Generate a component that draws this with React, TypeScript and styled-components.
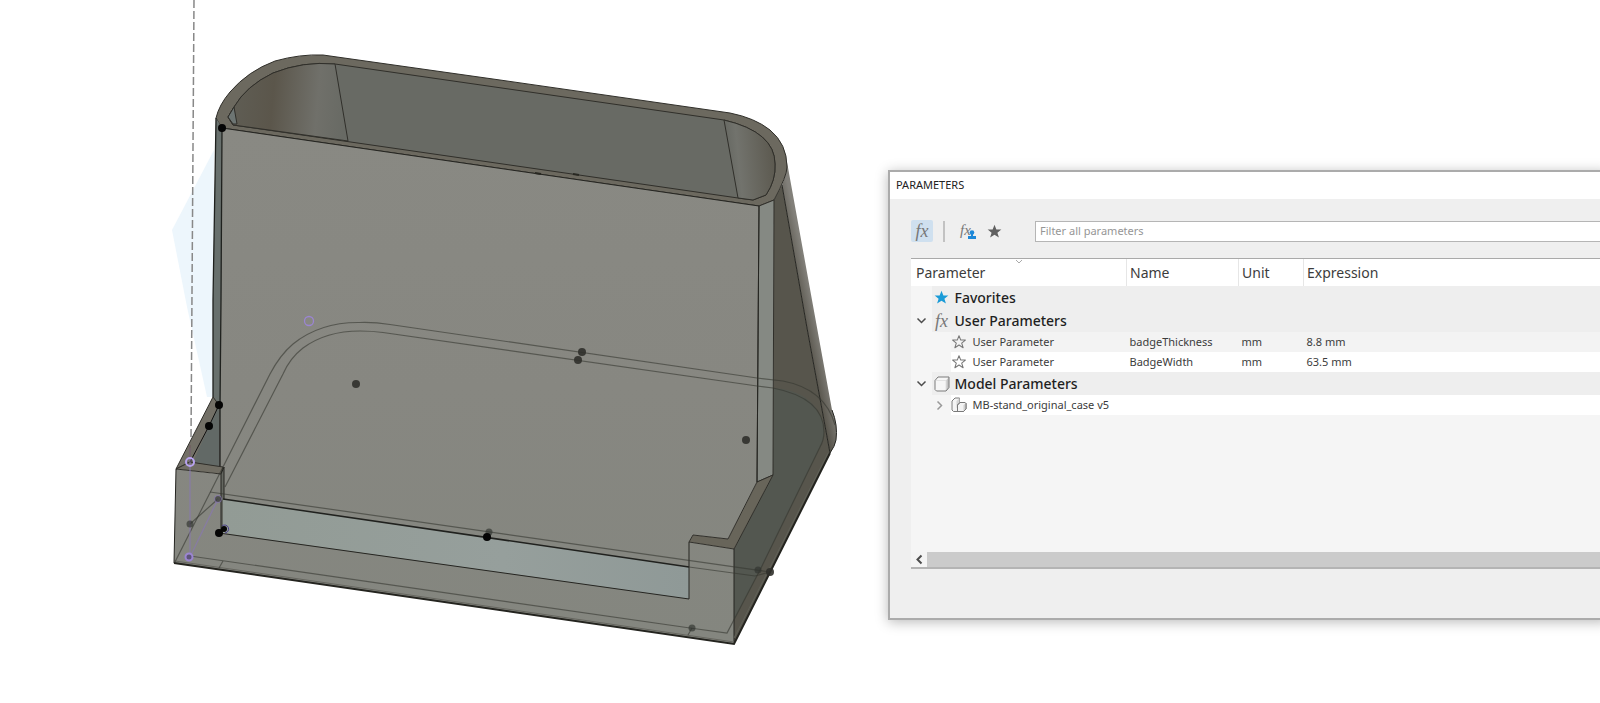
import React, { useState } from "react";
import styled, { createGlobalStyle, css } from "styled-components";

const GlobalStyle = createGlobalStyle`
  * { box-sizing: border-box; }
  html, body { margin: 0; background: #fff; }
  body {
    overflow-x: hidden;
    font-family: "Noto Sans", "Open Sans", sans-serif;
    color: #3c3c3c;
  }
  button, input, table { font: inherit; color: inherit; }
`;

const Page = styled.main`
  display: grid;
  grid-template-columns: minmax(0, 111fr) minmax(0, 89fr);
  align-items: start;
  min-height: 100vh;
  overflow: hidden;
`;

const Viewport = styled.svg`
  display: block;
  width: 100%;
  height: auto;
`;

const Panel = styled.section`
  margin: 170px -8px 0 0;
  border: 2px solid #ababab;
  border-right: 0;
  background: #efefef;
  box-shadow: 0 2px 12px rgba(0, 0, 0, 0.28);
`;

const TitleBar = styled.h1`
  margin: 0;
  height: 27px;
  padding: 0 6px;
  background: #fff;
  font: 400 11px/25px "Noto Sans", sans-serif;
  color: #222;
`;

const Toolbar = styled.div`
  display: flex;
  align-items: center;
  padding: 21px 0 16px 21px;
`;

const ToolButton = styled.button<{ $active?: boolean }>`
  display: grid;
  place-items: center;
  width: 22px;
  height: 22px;
  padding: 0;
  border: 0;
  border-radius: 2px;
  background: ${(p) => (p.$active ? "#cfe0ef" : "transparent")};
`;

const Divider = styled.span`
  width: 2px;
  height: 21px;
  margin: 0 12px 0 10px;
  background: #c2c2c2;
`;

const ToolGap = styled.span`
  width: 4px;
`;

const Filter = styled.input`
  flex: 1;
  min-width: 0;
  height: 21px;
  margin-left: 30px;
  padding: 0 4px 2px;
  border: 1px solid #b5b5b5;
  border-right: 0;
  border-radius: 0;
  background: #fff;
  font-size: 11px;
  outline: 0;
  &::placeholder { color: #969696; opacity: 1; }
`;

const Fx = styled.span<{ $small?: boolean }>`
  font: italic 400 ${(p) => (p.$small ? "15px/14px" : "18px/18px")} "Liberation Serif", serif;
  color: #777;
`;

const ListFrame = styled.div`
  margin: 0 0 49px 21px;
  border-top: 1px solid #a9a9a9;
  border-bottom: 2px solid #b4b4b4;
  background: #f5f5f5;
`;

const ListBody = styled.div`
  min-height: 293px;
`;

const Table = styled.table`
  width: 100%;
  table-layout: fixed;
  border-collapse: collapse;
`;

const HeadCell = styled.th<{ $width?: number }>`
  position: relative;
  height: 27px;
  padding: 0 3px;
  ${(p) => p.$width && css`width: ${p.$width}px;`}
  background: #fff;
  border-left: 1px solid #e6e6e6;
  font-size: 14px;
  font-weight: 400;
  line-height: 20px;
  text-align: left;
  &:first-child { padding-left: 4px; border-left-color: #fff; }
`;

const SortMark = styled.svg`
  position: absolute;
  top: 0;
  left: 50%;
  width: 8px;
  height: 5px;
  margin-left: -4px;
`;

type Tone = "group" | "plain" | "alt";
const tones: Record<Tone, string> = { group: "#eeeeee", plain: "#ffffff", alt: "#f3f3f3" };

const Row = styled.tr<{ $tone: Tone }>`
  height: ${(p) => (p.$tone === "group" ? 23 : 20)}px;
  background: ${(p) => tones[p.$tone]};
`;

const Cell = styled.td`
  padding: 0 3px;
  font-size: 11px;
  line-height: 18px;
`;

const NameCell = styled.th<{ $group?: boolean }>`
  padding: 0;
  font-size: ${(p) => (p.$group ? 14 : 11)}px;
  font-weight: ${(p) => (p.$group ? 500 : 400)};
  line-height: 18px;
  color: ${(p) => (p.$group ? "#1f1f1f" : "#3c3c3c")};
  text-align: left;
`;

const NameLine = styled.div<{ $group?: boolean }>`
  display: flex;
  align-items: center;
  height: ${(p) => (p.$group ? 23 : 20)}px;
  white-space: nowrap;
`;

const Gutter = styled.span<{ $nested?: boolean }>`
  display: flex;
  justify-content: ${(p) => (p.$nested ? "flex-end" : "flex-start")};
  align-items: center;
  flex: none;
  width: ${(p) => (p.$nested ? 39 : 20)}px;
  height: 100%;
  padding: ${(p) => (p.$nested ? "0 4px" : "0 3px")};
  background: #f5f5f5;
`;

const IconSlot = styled.span<{ $nested?: boolean }>`
  display: grid;
  place-items: center;
  flex: none;
  width: 16px;
  height: 18px;
  margin: ${(p) => (p.$nested ? "0 6px 0 0" : "0 5px 0 2px")};
`;

const Toggle = styled.button`
  display: grid;
  place-items: center;
  width: 14px;
  height: 16px;
  padding: 0;
  border: 0;
  background: none;
`;

const ScrollTrack = styled.div`
  display: flex;
  height: 15px;
`;

const ScrollButton = styled.button`
  display: grid;
  place-items: center;
  width: 16px;
  padding: 0;
  border: 0;
  background: #f4f4f4;
`;

const ScrollThumb = styled.div`
  flex: 1;
  background: #cbcbcb;
`;

const starPath = "M8 .8l2 5h5.300l-4.200 3.400 1.600 5.300L8 11.400l-4.700 3.100 1.600-5.300L.7 5.800H6z";

function Star({ fill, stroke = "none", size = 15 }: { fill: string; stroke?: string; size?: number }) {
  return (
    <svg width={size} height={size} viewBox="0 0 16 16" aria-hidden="true">
      <path d={starPath} fill={fill} stroke={stroke} strokeWidth="1.2" strokeLinejoin="round" />
    </svg>
  );
}

function Chevron({ open = false, left = false, light = false }) {
  const d = open ? "M1.500 3.500l4 4 4-4" : left ? "M7.500 1.500l-4 4 4 4" : "M3.500 1.500l4 4-4 4";
  return (
    <svg width="11" height="11" viewBox="0 0 11 11" aria-hidden="true">
      <path d={d} fill="none" stroke={light ? "#999" : "#4c4c4c"} strokeWidth={left ? 2 : 1.5} />
    </svg>
  );
}

function BodyIcon() {
  return (
    <svg width="16" height="16" viewBox="0 0 16 16" strokeLinejoin="round" aria-hidden="true">
      <path d="M1 4.500L4 1h11v10.500L12 15H2.500L1 13.500z" fill="#f6f6f6" />
      <path d="M12 4.500L15 1v10.500L12 15z" fill="#c4c4c4" />
      <path d="M1.500 4.500H12V15" fill="none" stroke="#e2e2e2" />
      <path d="M1 4.500L4 1h11v10.500L12 15H2.500L1 13.500z" fill="none" stroke="#7a7a7a" />
    </svg>
  );
}

function ComponentIcon() {
  return (
    <svg width="16" height="16" viewBox="0 0 16 16" fill="#f4f4f4" stroke="#7a7a7a" strokeLinejoin="round" aria-hidden="true">
      <path d="M1 4L4 1h4.500v13.500H2.500L1 13z" />
      <path d="M5.500 4L8.500 1v7.500L5.500 11z" fill="#d4d4d4" stroke="none" />
      <path d="M6.500 8L9 5.500h5l1 1v5.500l-2.500 2.500h-6z" />
      <path d="M12.500 8L15 6v6l-2.500 2.500z" fill="#d0d0d0" stroke="none" />
      <path d="M6.500 8L9 5.500h5l1 1v5.500l-2.500 2.500h-6z" fill="none" />
    </svg>
  );
}

const FxUser = styled.span`
  position: relative;
  display: block;
  width: 16px;
  height: 18px;
  text-align: left;
  line-height: 14px;
  svg { position: absolute; right: 0; bottom: 1px; }
`;

type Dot = [number, number, number?];
const solidDots: Dot[] = [[222, 128], [219, 405], [209, 426], [219, 533], [224, 529, 3], [487, 537]];
const fadedDots: Dot[] = [[356, 384], [582, 352], [578, 360], [746, 440], [770, 572]];
const faintDots: Dot[] = [[190, 524], [218, 499], [489, 532], [692, 628], [758, 570]];

function Model() {
  return (
    <Viewport viewBox="0 0 888 703" role="img" aria-label="Badge stand model">
      <defs>
        <linearGradient id="bend" gradientUnits="userSpaceOnUse" x1="234" y1="90" x2="346" y2="100">
          <stop offset="0" stopColor="#5f5d54" />
          <stop offset=".35" stopColor="#5b564b" />
          <stop offset=".75" stopColor="#70706a" />
          <stop offset="1" stopColor="#686a64" />
        </linearGradient>
        <linearGradient id="bendRight" gradientUnits="userSpaceOnUse" x1="726" y1="160" x2="776" y2="155">
          <stop offset="0" stopColor="#656761" />
          <stop offset=".25" stopColor="#72736d" />
          <stop offset="1" stopColor="#5b584e" />
        </linearGradient>
        <linearGradient id="front" x1="0" y1="0" x2="0" y2="1">
          <stop offset="0" stopColor="#898983" />
          <stop offset=".5" stopColor="#878781" />
          <stop offset="1" stopColor="#84867f" />
        </linearGradient>
        <linearGradient id="edge" gradientUnits="userSpaceOnUse" x1="798" y1="300" x2="812" y2="297">
          <stop offset="0" stopColor="#57544b" />
          <stop offset="1" stopColor="#82807a" />
        </linearGradient>
        <linearGradient id="window" x1="0" y1="0" x2="1" y2="0">
          <stop offset="0" stopColor="#929b95" />
          <stop offset=".6" stopColor="#969f9c" />
          <stop offset="1" stopColor="#8f9997" />
        </linearGradient>
      </defs>

      <path d="M214 150L193 190L172 230L187 307L207 397H214z" fill="#edf6fc" />
      <path d="M194 0L191 440" stroke="#888" strokeWidth="1.500" strokeDasharray="8 3" />

      {/* right side wall and rounded back edge */}
      <path d="M774 200L782 185L807 328L830 453L734 644V549L773 475z" fill="#57554c" />
      <path d="M787 162L812 300L832 410Q838 425 836 440Q835 446 830 453L807 328L782 185Q787 173 787 162z" fill="url(#edge)" />
      <path d="M773 388Q806 390 818 412Q829 428 820 447L760 570L734 620V549L773 475z" fill="#535750" />
      <path d="M782 185L807 328L830 453" stroke="#252521" fill="none" />
      <path d="M832 410Q838 425 836 440Q835 446 830 453" stroke="#252521" fill="none" />

      {/* top rim and the inside of the pocket */}
      <path d="M216 118Q219 105 230 92Q248 71 275 61Q300 54 323 55L337 57L500 80L730 113Q755 118 770 130Q787 144 787 167Q787 176 774 200L759 206L222 128z" fill="#6c695f" stroke="#302f2a" />
      <path d="M233 125L228 117L234 107Q246 86 273 73Q303 61 335 64L724 120Q775 132 775 164Q776 180 766 195L753 200L738 198z" fill="#686a64" stroke="#302f2a" />
      <path d="M233 125L228 117L234 107Q246 86 273 73Q303 61 335 64L348 141z" fill="url(#bend)" stroke="#302f2a" />
      <path d="M724 120Q775 132 775 164Q776 180 766 195L753 200L738 198z" fill="url(#bendRight)" stroke="#302f2a" />
      <path d="M228 117L234 107L237 124H233z" fill="#6d7573" stroke="#302f2a" />

      {/* front body with its notch */}
      <path d="M222 128L759 206L757 482L728 539L693 535L689 542L734 549V644L174 563L176 469L218 474L218 400z" fill="url(#front)" />
      <path d="M759 206L774 200L773 475L757 482z" fill="#858983" stroke="#302f2a" />
      <path d="M757 482L773 475L734 549L689 542L693 535L728 539z" fill="#68655a" stroke="#302f2a" />
      <path d="M216 118L222 128L220 467H213V300z" fill="#68706d" />
      <path d="M216 118L215 180L213 300V397M222 128L221 300L220 405V467" fill="none" stroke="#1f211e" strokeWidth="1.300" />

      {/* left arm */}
      <path d="M213 397L219 405L219 467L190 462L176 469z" fill="#737067" stroke="#302f2a" />
      <path d="M219 405V467L193 462L209 426z" fill="#626966" />
      <path d="M176 469L190 462L223 467L221 474z" fill="#706d63" stroke="#302f2a" />
      <path d="M221 474L224 467V528L221 533z" fill="#646760" stroke="#252521" />
      <path d="M219 405L209 426L190 462" stroke="#111" fill="none" />
      <path d="M223 499L689 567V599L223 533z" fill="url(#window)" />
      <path d="M223 499L689 567" stroke="#20211e" strokeWidth="1.500" />
      <path d="M219 533L689 599V542M176 469L174 563M734 549V644M222 128L759 206L757 482" stroke="#252521" fill="none" />

      {/* bottom edges */}
      <path d="M174 563L734 644L830 453" fill="none" stroke="#24241f" strokeWidth="2" />
      <path d="M175 561L734 642" stroke="#66665f" />
      <path d="M734 638L828 453" stroke="#606158" />

      {/* hidden base outline */}
      <g fill="none" stroke="#353731" strokeOpacity=".6" strokeWidth="1.200">
        <path d="M175 562L223 467L270 374Q280 355 293 344Q320 322 360 322.500Q374 322 390 324.500L757 378L783 381Q825 389 835 425" />
        <path d="M225 487L283 374Q290 358 303 348Q326 331 360 331Q372 331 383 332.500L757 386L773 388Q824 398 824 432Q824 440 820 447L760 570L727 633L690 628L190 556" />
        <path d="M210 492L770 572M689 567L755 576L770 572M190 524L218 499M223 561L219 568M692 628L688 635" />
      </g>
      <path d="M535 173L541 174M573 174L579 175" stroke="#282822" strokeWidth="2" />

      <g fill="none" stroke="#8878ae" strokeWidth="1.300">
        <path d="M190 448V557L218 499" strokeOpacity=".75" />
        <path d="M190 445V458" stroke="#705e5d" />
      </g>
      {faintDots.map(([x, y], i) => <circle key={i} cx={x} cy={y} r="3.500" fill="#30322e" fillOpacity=".65" />)}
      {fadedDots.map(([x, y], i) => <circle key={i} cx={x} cy={y} r="4" fill="#30302b" fillOpacity=".9" />)}
      {solidDots.map(([x, y, r = 4], i) => <circle key={i} cx={x} cy={y} r={r} fill="#050505" />)}
      <g fill="none" stroke="#9b85d2" strokeWidth="2">
        <circle cx="190" cy="462" r="4" stroke="#b7a2ee" />
        <circle cx="189" cy="557" r="3.500" fill="#5d5478" />
        <circle cx="218" cy="499" r="3.500" strokeOpacity=".6" strokeWidth="1" />
        <circle cx="309" cy="321" r="4.500" strokeWidth="1.300" />
        <path d="M222 526A4 4 0 1 1 225 533" stroke="#4b3f88" strokeWidth="1" />
      </g>
    </Viewport>
  );
}

interface ParameterRow {
  name: string;
  unit: string;
  expression: string;
}

const userParameters: ParameterRow[] = [
  { name: "badgeThickness", unit: "mm", expression: "8.8 mm" },
  { name: "BadgeWidth", unit: "mm", expression: "63.5 mm" },
];

interface GroupRowProps {
  label: string;
  icon: React.ReactNode;
  open?: boolean;
  onToggle?: () => void;
}

function GroupRow({ label, icon, open, onToggle }: GroupRowProps) {
  return (
    <Row $tone="group">
      <NameCell scope="row" colSpan={4} $group>
        <NameLine $group>
          <Gutter>
            {onToggle && (
              <Toggle type="button" aria-label={`Toggle ${label}`} aria-expanded={open} onClick={onToggle}>
                <Chevron open={open} />
              </Toggle>
            )}
          </Gutter>
          <IconSlot>{icon}</IconSlot>
          {label}
        </NameLine>
      </NameCell>
    </Row>
  );
}

export default function App() {
  const [userOpen, setUserOpen] = useState(true);
  const [modelOpen, setModelOpen] = useState(true);
  const [filter, setFilter] = useState("");

  return (
    <>
      <GlobalStyle />
      <Page>
        <Model />
        <Panel aria-labelledby="panel-title">
          <TitleBar id="panel-title">PARAMETERS</TitleBar>
          <Toolbar>
            <ToolButton type="button" $active aria-label="All parameters"><Fx>fx</Fx></ToolButton>
            <Divider />
            <ToolButton type="button" aria-label="User parameters">
              <FxUser>
                <Fx $small>fx</Fx>
                <svg width="8" height="9" viewBox="0 0 8 9" fill="#1e88d8" aria-hidden="true">
                  <circle cx="4" cy="2.500" r="2.300" />
                  <path d="M3 4h2v2h3v3H0V6h3z" />
                </svg>
              </FxUser>
            </ToolButton>
            <ToolGap />
            <ToolButton type="button" aria-label="Favorites"><Star fill="#606060" /></ToolButton>
            <Filter
              type="text"
              aria-label="Filter all parameters"
              placeholder="Filter all parameters"
              value={filter}
              onChange={(e) => setFilter(e.target.value)}
            />
          </Toolbar>
          <ListFrame>
            <ListBody>
              <Table>
                <thead>
                  <tr>
                    <HeadCell scope="col" $width={215}>
                      Parameter
                      <SortMark viewBox="0 0 8 5" aria-hidden="true">
                        <path d="M1 1l3 3 3-3" fill="none" stroke="#aaa" />
                      </SortMark>
                    </HeadCell>
                    <HeadCell scope="col" $width={112}>Name</HeadCell>
                    <HeadCell scope="col" $width={65}>Unit</HeadCell>
                    <HeadCell scope="col">Expression</HeadCell>
                  </tr>
                </thead>
                <tbody>
                  <GroupRow label="Favorites" icon={<Star fill="#1a9bd7" />} />
                  <GroupRow label="User Parameters" icon={<Fx>fx</Fx>} open={userOpen} onToggle={() => setUserOpen(!userOpen)} />
                  {userOpen && userParameters.map((p, i) => (
                    <Row key={p.name} $tone={i % 2 ? "plain" : "alt"}>
                      <NameCell scope="row">
                        <NameLine>
                          <Gutter $nested />
                          <IconSlot $nested><Star fill="none" stroke="#777" size={14} /></IconSlot>
                          User Parameter
                        </NameLine>
                      </NameCell>
                      <Cell>{p.name}</Cell>
                      <Cell>{p.unit}</Cell>
                      <Cell>{p.expression}</Cell>
                    </Row>
                  ))}
                  <GroupRow label="Model Parameters" icon={<BodyIcon />} open={modelOpen} onToggle={() => setModelOpen(!modelOpen)} />
                  {modelOpen && (
                    <Row $tone="plain">
                      <NameCell scope="row" colSpan={4}>
                        <NameLine>
                          <Gutter $nested>
                            <Toggle type="button" aria-label="Expand MB-stand_original_case v5" aria-expanded={false}>
                              <Chevron light />
                            </Toggle>
                          </Gutter>
                          <IconSlot $nested><ComponentIcon /></IconSlot>
                          MB-stand_original_case v5
                        </NameLine>
                      </NameCell>
                    </Row>
                  )}
                </tbody>
              </Table>
            </ListBody>
            <ScrollTrack>
              <ScrollButton type="button" aria-label="Scroll left"><Chevron left /></ScrollButton>
              <ScrollThumb />
            </ScrollTrack>
          </ListFrame>
        </Panel>
      </Page>
    </>
  );
}
